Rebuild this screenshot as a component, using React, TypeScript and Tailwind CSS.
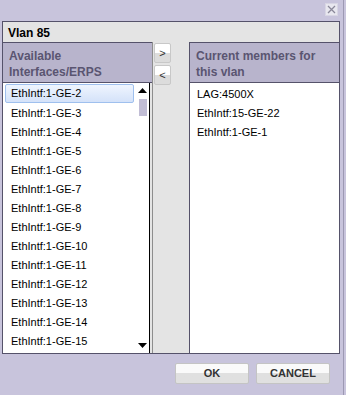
const available = [
  "EthIntf:1-GE-2",
  "EthIntf:1-GE-3",
  "EthIntf:1-GE-4",
  "EthIntf:1-GE-5",
  "EthIntf:1-GE-6",
  "EthIntf:1-GE-7",
  "EthIntf:1-GE-8",
  "EthIntf:1-GE-9",
  "EthIntf:1-GE-10",
  "EthIntf:1-GE-11",
  "EthIntf:1-GE-12",
  "EthIntf:1-GE-13",
  "EthIntf:1-GE-14",
  "EthIntf:1-GE-15",
];

const members = ["LAG:4500X", "EthIntf:15-GE-22", "EthIntf:1-GE-1"];

function ListHeader({ children }: { children: React.ReactNode }) {
  return (
    <div className="h-[41px] shrink-0 border-t border-b border-[#55526a] bg-[#b8b4cc] px-[6px] pt-[5px] text-[12px] font-bold leading-[16px] text-[#5a5571]">
      {children}
    </div>
  );
}

function MoveButton({ label }: { label: string }) {
  return (
    <button className="flex h-[20px] w-[17px] items-center justify-center rounded-[2px] border border-[#c8c8c8] bg-gradient-to-b from-white from-50% to-[#dcdcdc] to-50% text-[11px] leading-none text-[#333]">
      {label}
    </button>
  );
}

function DialogButton({ label }: { label: string }) {
  return (
    <button className="h-[21px] w-[74px] rounded-[2px] border border-[#c4c4c4] bg-gradient-to-b from-[#fafafa] from-50% to-[#e0e0e0] to-50% text-[11px] font-bold text-[#333]">
      {label}
    </button>
  );
}

export default function App() {
  return (
    <div className="flex h-[395px] w-[346px] bg-[#c8c4dc] font-['Liberation_Sans',Arial,sans-serif]">
      <div className="relative flex h-full w-[344px] flex-col border-r border-[#9d99b3]">
        {/* close box */}
        <div className="absolute right-[5px] top-[3px] flex h-[13px] w-[13px] items-center justify-center border border-[#d8d6e4] bg-[#e8e7ef]">
          <svg width="9" height="9" viewBox="0 0 9 9">
            <path d="M1 1L8 8M8 1L1 8" stroke="#8a8899" strokeWidth="1.3" />
          </svg>
        </div>

        <div className="ml-[2px] mt-[21px] flex h-[333px] w-[338px] flex-col border border-[#55526a] bg-[#e4e4e4]">
          <div className="h-[20px] shrink-0 pl-[5px] pt-[4px] text-[12px] font-bold leading-[14px] text-black">
            Vlan 85
          </div>

          <div className="flex min-h-0 flex-1">
            {/* available */}
            <div className="flex w-[150px] flex-col border-r border-[#8d8d8d]">
              <ListHeader>
                Available
                <br />
                Interfaces/ERPS
              </ListHeader>
              <div className="flex min-h-0 flex-1 pr-[2px]">
                <div className="flex min-h-0 flex-1 bg-white border-r border-black">
                  <div className="min-w-0 flex-1 overflow-hidden pt-[1px] text-[11px] leading-[19px] text-black">
                    {available.map((name, i) =>
                      i === 0 ? (
                        <div
                          key={name}
                          className="mx-[2px] h-[19px] rounded-[2px] border border-[#9fc0ee] bg-gradient-to-b from-[#eff5fe] to-[#d4e2f9] pl-[5px] leading-[17px]"
                        >
                          {name}
                        </div>
                      ) : (
                        <div key={name} className="h-[19px] pl-[8px] leading-[20px]">
                          {name}
                        </div>
                      )
                    )}
                  </div>
                  <div className="flex w-[13px] shrink-0 flex-col items-center pt-[5px] pb-[5px]">
                    <svg width="9" height="5" viewBox="0 0 9 5">
                      <path d="M0 5L4.5 0L9 5Z" fill="#000" />
                    </svg>
                    <div className="mt-[6px] h-[17px] w-[8px] bg-[#c1bdd5]" />
                    <div className="flex-1" />
                    <svg width="9" height="5" viewBox="0 0 9 5">
                      <path d="M0 0L9 0L4.5 5Z" fill="#000" />
                    </svg>
                  </div>
                </div>
              </div>
            </div>

            {/* move buttons */}
            <div className="flex w-[36px] shrink-0 flex-col gap-[2px] pl-[1px] pt-[1px]">
              <MoveButton label=">" />
              <MoveButton label="<" />
            </div>

            {/* members */}
            <div className="flex min-w-0 flex-1 flex-col border-l border-[#55526a]">
              <ListHeader>
                Current members for
                <br />
                this vlan
              </ListHeader>
              <div className="flex-1 bg-white pt-[1px] text-[11px] text-black">
                {members.map((name) => (
                  <div key={name} className="h-[19px] pl-[7px] leading-[20px]">
                    {name}
                  </div>
                ))}
              </div>
            </div>
          </div>
        </div>

        <div className="mt-[9px] flex justify-end gap-[7px] pr-[13px]">
          <DialogButton label="OK" />
          <DialogButton label="CANCEL" />
        </div>
      </div>
    </div>
  );
}
